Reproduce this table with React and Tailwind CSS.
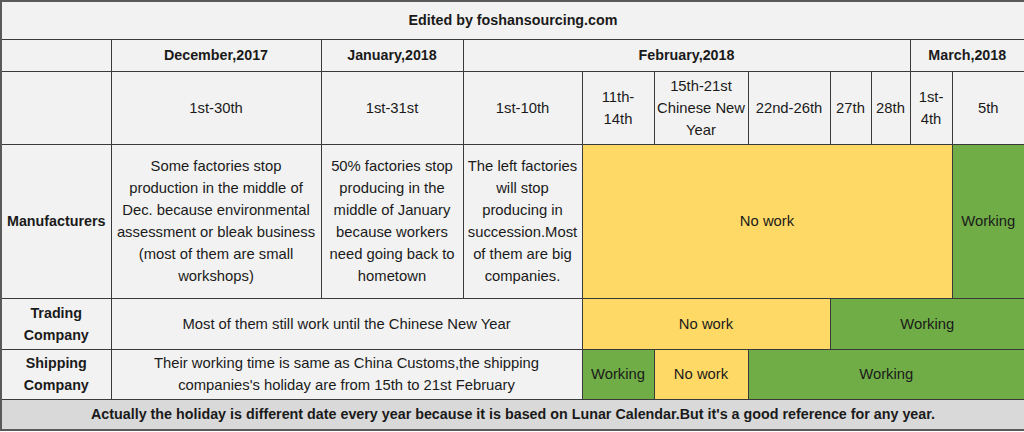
const cell = "border border-[#3a3a3a] text-center align-middle px-0 whitespace-nowrap";
const yellow = "bg-[#ffd966]";
const green = "bg-[#70ad47]";
const bold = "font-bold text-[14.3px]";

const cols = [110, 210, 142, 119, 72, 94, 82, 41, 39, 42, 73];

const Lines = ({ items }) =>
  items.map((t, i) => (
    <span key={i} className="block">
      {t}
    </span>
  ));

export default function App() {
  return (
    <div className="w-[1024px] h-[432px] bg-white font-['Liberation_Sans',Arial,sans-serif] text-[14.8px] leading-[22px] text-[#1a1a1a]">
      <table className="table-fixed border-collapse w-[1024px] bg-[#f2f2f2] border-2 border-[#5a5a5a]">
        <colgroup>
          {cols.map((w, i) => (
            <col key={i} style={{ width: w }} />
          ))}
        </colgroup>
        <tbody>
          <tr className="h-[38px]">
            <td colSpan={11} className={`${cell} ${bold}`}>
              Edited by foshansourcing.com
            </td>
          </tr>
          <tr className={`h-[32px] ${bold}`}>
            <td className={cell}></td>
            <td className={cell}>December,2017</td>
            <td className={cell}>January,2018</td>
            <td colSpan={6} className={cell}>February,2018</td>
            <td colSpan={2} className={cell}>March,2018</td>
          </tr>
          <tr className="h-[73px]">
            <td className={cell}></td>
            <td className={cell}>1st-30th</td>
            <td className={cell}>1st-31st</td>
            <td className={cell}>1st-10th</td>
            <td className={cell}>
              <Lines items={["11th-", "14th"]} />
            </td>
            <td className={cell}>
              <Lines items={["15th-21st", "Chinese New", "Year"]} />
            </td>
            <td className={cell}>22nd-26th</td>
            <td className={cell}>27th</td>
            <td className={cell}>28th</td>
            <td className={cell}>
              <Lines items={["1st-", "4th"]} />
            </td>
            <td className={cell}>5th</td>
          </tr>
          <tr className="h-[154px]">
            <td className={`${cell} ${bold}`}>Manufacturers</td>
            <td className={cell}>
              <Lines
                items={[
                  "Some factories stop",
                  "production in the middle of",
                  "Dec. because environmental",
                  "assessment or bleak business",
                  "(most of them are small",
                  "workshops)",
                ]}
              />
            </td>
            <td className={cell}>
              <Lines
                items={[
                  "50% factories stop",
                  "producing in the",
                  "middle of January",
                  "because workers",
                  "need going back to",
                  "hometown",
                ]}
              />
            </td>
            <td className={cell}>
              <Lines
                items={[
                  "The left factories",
                  "will stop",
                  "producing in",
                  "succession.Most",
                  "of them are big",
                  "companies.",
                ]}
              />
            </td>
            <td colSpan={6} className={`${cell} ${yellow}`}>
              No work
            </td>
            <td className={`${cell} ${green}`}>Working</td>
          </tr>
          <tr className="h-[51px]">
            <td className={`${cell} ${bold}`}>
              <Lines items={["Trading", "Company"]} />
            </td>
            <td colSpan={3} className={cell}>
              Most of them still work until the Chinese New Year
            </td>
            <td colSpan={3} className={`${cell} ${yellow}`}>
              No work
            </td>
            <td colSpan={4} className={`${cell} ${green}`}>
              Working
            </td>
          </tr>
          <tr className="h-[50px]">
            <td className={`${cell} ${bold}`}>
              <Lines items={["Shipping", "Company"]} />
            </td>
            <td colSpan={3} className={cell}>
              <Lines
                items={[
                  "Their working time is same as China Customs,the shipping",
                  "companies's holiday are from 15th to 21st February",
                ]}
              />
            </td>
            <td className={`${cell} ${green}`}>Working</td>
            <td className={`${cell} ${yellow}`}>No work</td>
            <td colSpan={5} className={`${cell} ${green}`}>
              Working
            </td>
          </tr>
          <tr className="h-[31px]">
            <td colSpan={11} className={`${cell} ${bold} bg-[#d9d9d9]`}>
              Actually the holiday is different date every year because it is
              based on Lunar Calendar.But it's a good reference for any year.
            </td>
          </tr>
        </tbody>
      </table>
    </div>
  );
}
